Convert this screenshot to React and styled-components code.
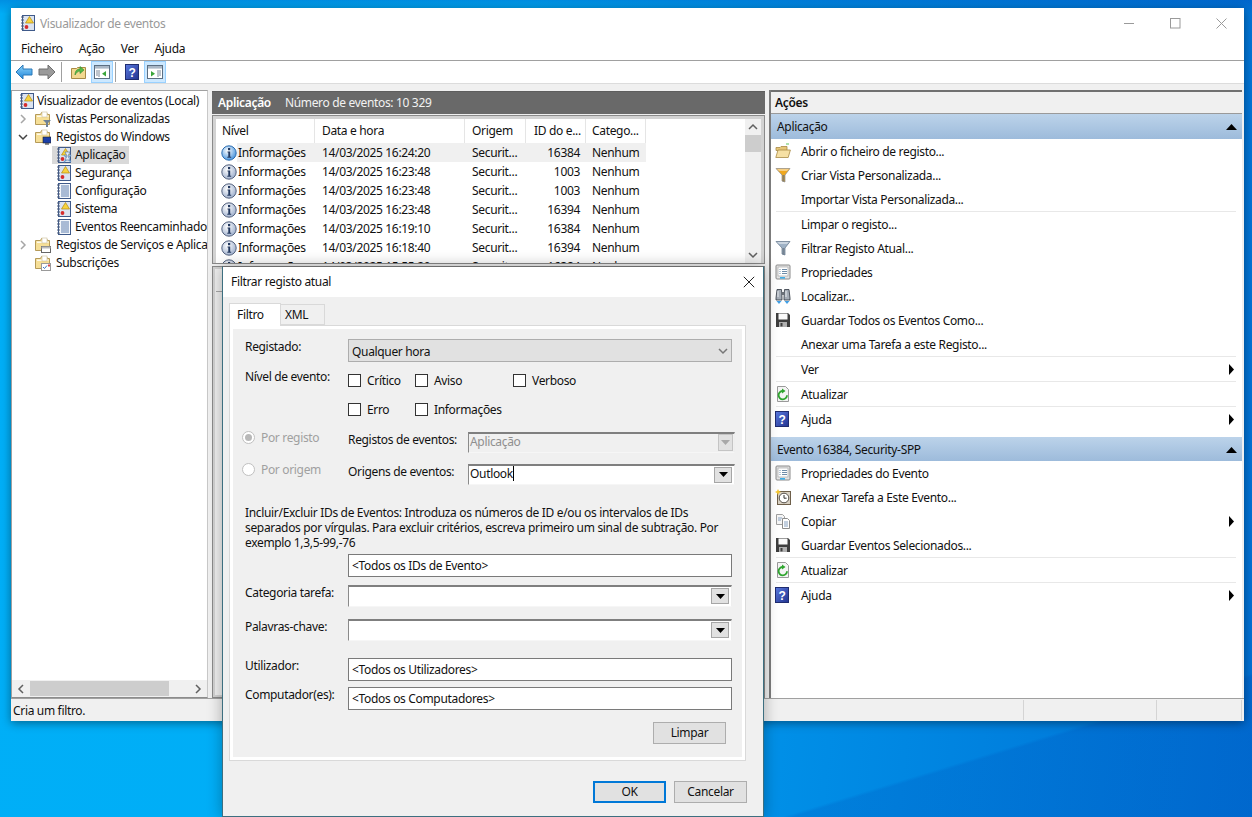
import React from "react";
import styled, { createGlobalStyle } from "styled-components";

const Global = createGlobalStyle`
  html, body { margin: 0; padding: 0; width: 100%; height: 100%; overflow: hidden; }
  body { font-family: "Noto Sans", "Open Sans", "Liberation Sans", sans-serif; font-size: 12px; letter-spacing: -0.33px; color: #111; }
  * { box-sizing: border-box; }
`;

const Desktop = styled.div`
  position: relative; width: 1252px; height: 817px; overflow: hidden;
  background:
    linear-gradient(163deg, transparent 88%, rgba(0,60,170,.16) 88.3%),
    linear-gradient(180deg, rgba(0,60,170,.28) 0, rgba(0,60,170,0) 14px),
    linear-gradient(96deg, #00aff7 0%, #00adf6 40%, #0091e8 62%, #0070d4 100%);
`;
const Win = styled.div`
  position: absolute; left: 11px; top: 8px; width: 1233px; height: 713px;
  display: flex; flex-direction: column; background: #f0f0f0;
  box-shadow: 0 2px 9px rgba(0,0,0,.42);
`;
const TitleBar = styled.div`
  height: 30px; flex: none; display: flex; align-items: center; background: #fff; padding-left: 9px; color: #999;
`;
const TitleText = styled.span`margin-left: 4px; flex: 1;`;
const WinBtn = styled.div`width: 46px; height: 30px; display: flex; align-items: center; justify-content: center;`;
const MenuBar = styled.div`
  height: 23px; flex: none; display: flex; align-items: center; background: #fff; padding-left: 10px; gap: 16px;
  border-bottom: 1px solid #a0a0a0;
`;
const MenuItem = styled.span`padding-bottom: 2px;`;
const Toolbar = styled.div`
  height: 23px; flex: none; display: flex; align-items: center; background: #fff; padding-left: 4px;
  border-bottom: 1px solid #dcdcdc;
`;
const ToolBtn = styled.div`
  width: ${p => p.$w || 22}px; height: 22px; display: flex; align-items: center; justify-content: center;
  margin: 0 ${p => p.$mr || 0}px 0 ${p => p.$ml || 0}px;
  background: ${p => (p.$on ? "#cce8ff" : "transparent")}; border: 1px solid ${p => (p.$on ? "#99d1ff" : "transparent")};
`;
const ToolSep = styled.div`width: 1px; height: 20px; background: #a0a0a0; margin: 0 ${p => p.$r}px 0 ${p => p.$l}px;`;

const Main = styled.div`flex: 1; min-height: 0; display: flex; padding: 6px 2px 0 0;`;
const TreePane = styled.div`
  width: 197px; flex: none; display: flex; flex-direction: column; background: #fff;
  border: 1px solid #a0a0a0; border-right-color: #c8c8c8; border-bottom-color: #8c8c8c; margin-right: 4px;
`;
const TreeBody = styled.div`flex: 1; min-height: 0; overflow: hidden; padding-top: 1px;`;
const TreeRow = styled.div`
  height: 18px; display: flex; align-items: center; white-space: nowrap; padding-left: ${p => p.$indent}px;
`;
const Chevron = styled.span`width: 14px; flex: none; display: flex; align-items: center; justify-content: center; margin-right: 5px;`;
const TreeLabel = styled.span`margin-left: ${p => p.$gap}px; line-height: 18px;`;
const TreeSel = styled.div`
  display: flex; align-items: center; height: 18px; background: ${p => (p.$sel ? "#d9d9d9" : "transparent")}; padding: 0 3px 0 4px; margin-left: -4px;
`;
const HScroll = styled.div`
  height: 17px; flex: none; display: flex; align-items: center; background: #f0f0f0; justify-content: space-between;
`;
const HThumb = styled.div`width: 139px; height: 15px; background: #cdcdcd; margin: 0 auto 0 0;`;
const ScrollArrow = styled.span`width: 18px; flex: none; display: flex; align-items: center; justify-content: center;`;

const Center = styled.div`width: 553px; flex: none; display: flex; flex-direction: column; margin-right: 4px;`;
const Header = styled.div`
  height: 23px; flex: none; background: #696969; display: flex; align-items: center; padding: 0 0 2px 6px; color: #f2f2f2; margin-top: 1px;
  border-top: 1px solid #5e5e5e;
`;
const HeaderTitle = styled.b`font-weight: 600; color: #fff; margin-right: 14px;`;
const TablePanel = styled.div`
  height: 149px; flex: none; margin-top: 1px; display: flex;
  border: 1px solid #8a8a8a; background: #fff; box-shadow: inset 0 0 0 3px #d2d2d2; padding: 3px 3px 0 3px;
`;
const TableArea = styled.div`flex: 1; min-width: 0; overflow: hidden; background: #fff;`;
const Row = styled.div`display: flex; height: ${p => p.$h}px; align-items: center; width: 430px;`;
const Cell = styled.div`
  width: ${p => p.$w}px; flex: none; height: 100%; display: flex; align-items: center; white-space: nowrap;
  padding: 0 6px 0 ${p => p.$pl ?? 7}px; justify-content: ${p => (p.$right ? "flex-end" : "flex-start")};
`;
const HeadCell = styled(Cell)`border-right: 1px solid #e5e5e5; padding-bottom: 1px;`;
const InfoText = styled.span`
  flex: 1; height: 100%; display: flex; align-items: center; padding-left: 1px; margin-right: -6px;
  background: ${p => (p.$hi ? "#f0f0f0" : "transparent")};
`;
const HiCell = styled(Cell)`background: ${p => (p.$hi ? "#f0f0f0" : "transparent")};`;
const VScroll = styled.div`
  width: 16px; flex: none; display: flex; flex-direction: column; background: #f0f0f0; align-items: stretch;
`;
const VThumb = styled.div`height: 17px; background: #cdcdcd; flex: none;`;
const VArrow = styled.div`height: 16px; flex: none; display: flex; align-items: center; justify-content: center;`;
const VSpace = styled.div`flex: 1;`;
const LowerPanel = styled.div`
  flex: 1; margin-top: 2px; border: 1px solid #8a8a8a; background: #f0f0f0; box-shadow: inset 0 0 0 2px #d2d2d2; padding: 3px;
`;
const LowerHead = styled.div`height: 22px; border-bottom: 1px solid #a8a8a8;`;

const Actions = styled.div`flex: 1; min-width: 0; display: flex; flex-direction: column; background: #fff; border-left: 2px solid #7c7c7c;`;
const ActionsHead = styled.div`
  height: 24px; flex: none; display: flex; align-items: center; padding: 0 0 0 4px; font-weight: 600; background: #f0f0f0;
  border-top: 2px solid #707070; border-bottom: 1px solid #9a9a9a;
`;
const Section = styled.div`
  height: ${p => p.$h}px; flex: none; display: flex; align-items: center; justify-content: space-between;
  padding: 0 5px 0 6px; background: linear-gradient(180deg, #bcd3ea 0%, #9dbbdb 100%);
  margin-top: ${p => p.$mt || 0}px;
`;
const ActionRow = styled.div`height: 24px; display: flex; align-items: center; padding: 0 5px 0 4px;`;
const ActionIcon = styled.span`width: 26px; flex: none; display: flex; align-items: center;`;
const ActionText = styled.span`flex: 1; white-space: nowrap;`;
const ActionSep = styled.div`height: 1px; background: #e8e8e8; margin: 0 6px 0 5px;`;

const Status = styled.div`
  height: 23px; flex: none; display: flex; align-items: center; background: #f0f0f0; border-top: 1px solid #a0a0a0;
`;
const StatusText = styled.span`width: 1012px; flex: none; padding-left: 2px;`;
const StatusDiv = styled.span`width: 1px; height: 20px; background: #d4d4d4; flex: none; margin-right: ${p => p.$mr}px;`;

/* Dialog */
const Dialog = styled.div`
  position: absolute; left: 222px; top: 266px; width: 542px; height: 551px; background: #f0f0f0;
  display: flex; flex-direction: column; border: 1px solid #3d6f80; border-top-color: #6b6b6b;
  box-shadow: 0 0 14px rgba(0,0,0,.3);
`;
const DlgTitle = styled.div`height: 30px; flex: none; background: #fff; display: flex; align-items: center; padding: 0 8px 1px; justify-content: space-between;`;
const Tabs = styled.div`height: 28px; flex: none; display: flex; align-items: flex-end; padding-left: 6px; position: relative; z-index: 1;`;
const Tab = styled.div`
  height: ${p => (p.$on ? 23 : 21)}px; width: ${p => p.$w}px; display: flex; align-items: center; justify-content: flex-start;
  background: ${p => (p.$on ? "#fff" : "#f0f0f0")}; border: 1px solid #d9d9d9;
  border-bottom: ${p => (p.$on ? "none" : "1px solid #d9d9d9")}; border-left: ${p => (p.$on ? "1px solid #d9d9d9" : "none")};
  margin-bottom: ${p => (p.$on ? -1 : 0)}px; padding: 0 0 ${p => (p.$on ? 2 : 0)}px ${p => (p.$on ? 7 : 4)}px;
`;
const TabPanel = styled.div`
  height: 436px; width: 517px; flex: none; margin-left: 6px; border: 1px solid #d9d9d9; box-shadow: inset 0 0 0 3px #fff; background: #f0f0f0;
  padding: 13px 0 0 15px;
`;
const FormRow = styled.div`display: flex; align-items: flex-start; margin-top: ${p => p.$mt || 0}px; margin-left: ${p => p.$ml || 0}px;`;
const Label = styled.div`width: ${p => p.$w || 103}px; flex: none; line-height: 16px; margin-top: ${p => p.$top || 0}px; white-space: nowrap;`;
const SelectBox = styled.div`
  width: 384px; height: 23px; background: #e1e1e1; border: 1px solid #adadad; display: flex; align-items: center; justify-content: space-between; padding: 1px 3px 0 3px;
`;
const Checks = styled.div`display: flex; flex-direction: column; gap: 16px; padding-top: 5px;`;
const CheckRow = styled.div`display: flex; height: 13px; align-items: center;`;
const CheckItem = styled.div`width: ${p => p.$w}px; flex: none; display: flex; align-items: center; white-space: nowrap;`;
const CheckBox = styled.span`width: 13px; height: 13px; flex: none; border: 1px solid #333; background: #fff; margin-right: 6px;`;
const RadioItem = styled.div`width: 106px; flex: none; display: flex; align-items: center; color: #a0a0a0; height: 14px; margin-top: ${p => p.$top || 0}px;`;
const Radio = styled.span`
  width: 13px; height: 13px; flex: none; border-radius: 50%; border: 1px solid #c0c0c0; background: #fff; margin-right: 6px;
  display: flex; align-items: center; justify-content: center;
  &::after { content: ""; width: 7px; height: 7px; border-radius: 50%; background: ${p => (p.$on ? "#b8b8b8" : "transparent")}; }
`;
const Combo = styled.div`
  width: ${p => p.$w}px; height: ${p => p.$h || 21}px; display: flex; align-items: center; padding: 0 ${p => p.$pr || 2}px 0 1px;
  background: ${p => (p.$off ? "#f0f0f0" : "#fff")}; color: ${p => (p.$off ? "#8f8f8f" : "#111")};
  border-top: 2px solid #7f7f7f; border-left: 1px solid #8a8a8a; border-right: 1px solid #eee; border-bottom: 1px solid #f6f6f6;
`;
const ComboText = styled.span`flex: 1; white-space: nowrap; display: flex; align-items: center; padding-bottom: 3px;`;
const Caret = styled.i`display: inline-block; width: 1px; height: 15px; background: #000;`;
const ComboBtn = styled.span`
  width: ${p => p.$w || 18}px; height: ${p => p.$h || 16}px; flex: none; display: flex; align-items: center; justify-content: center;
  background: #e1e1e1; border: 1px solid ${p => (p.$off ? "#c4c4c4" : "#a6a6a6")}; margin-top: -1px;
`;
const Desc = styled.div`line-height: 15px; margin-top: ${p => p.$mt}px; white-space: nowrap;`;
const TextBox = styled.div`
  width: 384px; height: 23px; background: #fff; border: 1px solid #7a7a7a; display: flex; align-items: center; padding-left: 3px; white-space: nowrap;
`;
const BtnRow = styled.div`display: flex; justify-content: flex-end; gap: 8px; margin-top: ${p => p.$mt}px; padding-right: ${p => p.$pr}px;`;
const Btn = styled.div`
  width: 73px; height: 22px; display: flex; align-items: center; justify-content: center; background: #e1e1e1;
  border: ${p => (p.$def ? "2px solid #0078d7" : "1px solid #adadad")}; padding-bottom: 1px;
`;

/* Icons */
const Svg = ({ s = 16, children, vb = "0 0 16 16" }) => (
  <svg width={s} height={s} viewBox={vb} style={{ display: "block", flex: "none" }}>{children}</svg>
);
const Book = ({ warn }) => (
  <>
    <rect x="2.5" y="0.5" width="12" height="15" fill={warn ? "#dbe3f0" : "#f4f7fb"} stroke="#3f5a8a" />
    {[2, 5, 8, 11, 14].map(y => <path key={y} d={`M1 ${y}h3`} stroke="#4a5a7a" />)}
    {!warn && [3, 5, 7, 9, 11, 13].map(y => <path key={y} d={`M5 ${y}h8`} stroke="#5f7fae" />)}
    {warn && <path d="M9.5 1.5 L13.5 8 H5.5 Z" fill="#f7d33c" stroke="#b58a10" strokeWidth=".7" />}
    {warn && <circle cx="6.5" cy="12" r="1.9" fill="#d62c2c" />}
  </>
);
const LogBook = () => <Svg><Book warn /></Svg>;
const PlainLog = () => <Svg><Book /></Svg>;
const FolderBase = () => (
  <>
    <path d="M.5 3.5h5l1-2h5l1 2h2v10H.5z" fill="#f6df97" stroke="#b59a58" />
    <rect x="2" y="4.5" width="11.5" height="1.5" fill="#fff" opacity=".8" />
    <rect x="7" y="1" width="5" height="5" fill="#fff" stroke="#c9bd96" strokeWidth=".6" />
  </>
);
const FolderFilter = () => <Svg><FolderBase /><path d="M8 9h8l-3 3v4h-2v-4z" fill="#6f8296" /></Svg>;
const FolderWin = () => <Svg><FolderBase /><rect x="8" y="8" width="8" height="6" fill="#1b3fa8" stroke="#222" strokeWidth=".6" /><path d="M10 15h4" stroke="#222" /></Svg>;
const FolderSvc = () => <Svg><FolderBase /><rect x="6.5" y="9.5" width="9" height="6" fill="#fff" stroke="#666" /><rect x="6.5" y="9.5" width="9" height="2" fill="#bbb" /></Svg>;
const FolderSub = () => <Svg><FolderBase /><rect x="6.5" y="8.5" width="9" height="7" fill="#fff" stroke="#9a9a9a" /><path d="M8 12l1.5 1.5L12 10.5" stroke="#3a78c8" fill="none" /><rect x="13" y="9.5" width="2" height="2" fill="#d44" /></Svg>;
const AppLog = () => (
  <Svg>
    <Book warn />
    <path d="M8 8l7 7M15 8l-7 7" stroke="#6f9fd0" strokeWidth="1.3" />
    <path d="M9 5h5l-2 4 2 4H9l2-4z" fill="#e6eef8" stroke="#5a7aa8" strokeWidth=".7" />
  </Svg>
);
const Info = ({ blue }) => (
  <Svg>
    <defs>
      <radialGradient id={blue ? "ib" : "ig"} cx=".4" cy=".35" r=".7">
        <stop offset="0" stopColor="#fff" />
        <stop offset="1" stopColor={blue ? "#3f8fdc" : "#9aaccb"} />
      </radialGradient>
    </defs>
    <circle cx="8" cy="8" r="7.2" fill={`url(#${blue ? "ib" : "ig"})`} stroke={blue ? "#2b6cb0" : "#54627e"} />
    <rect x="7" y="3" width="2.2" height="2.2" fill="#23395f" />
    <path d="M6.5 6.5h2.7v5.2h1v1H6.3v-1h1V7.5h-.8z" fill="#23395f" />
  </Svg>
);
const ArrowLeft = () => (
  <Svg s={18} vb="0 0 18 18">
    <defs><linearGradient id="al" x1="0" y1="0" x2="0" y2="1"><stop offset="0" stopColor="#8fd4fa" /><stop offset="1" stopColor="#1f86da" /></linearGradient></defs>
    <path d="M1 9l7-7v4h9v6H8v4z" fill="url(#al)" stroke="#2a78b8" />
  </Svg>
);
const ArrowRight = () => (
  <Svg s={18} vb="0 0 18 18">
    <path d="M17 9l-7-7v4H1v6h9v4z" fill="#9b9b9b" stroke="#6e6e6e" />
  </Svg>
);
const FolderUp = () => (
  <Svg>
    <path d="M.5 4.5h5l1-1h8v11H.5z" fill="#f3d88f" stroke="#a88a45" />
    <path d="M4 11 C4 7 6 5 9 5 V2.5 L13 6l-4 3.5V7C7 7 5.5 8.5 4 11z" fill="#58b947" stroke="#2f8a2a" strokeWidth=".6" />
  </Svg>
);
const PaneIcon = ({ right }) => (
  <Svg>
    <rect x=".5" y="1.5" width="15" height="13" fill="#fff" stroke="#5b6e82" />
    <rect x="1" y="2" width="14" height="2.6" fill="#a9b7c6" />
    {right
      ? <><path d="M11 6v7M12 7h2M12 9h2M12 11h2" stroke="#7c8a9a" /><path d="M4 7l4 2.8L4 12.5z" fill="#3aa53a" /></>
      : <><path d="M5 6v7M2 7h2M2 9h2M2 11h2" stroke="#7c8a9a" /><path d="M12 7L8 9.8l4 2.7z" fill="#3aa53a" /></>}
  </Svg>
);
const Help = () => (
  <svg width="14" height="16" viewBox="0 0 14 16" style={{ display: "block", flex: "none" }}>
    <defs><linearGradient id="hg" x1="0" y1="0" x2="1" y2="1"><stop offset="0" stopColor="#5a7ae0" /><stop offset="1" stopColor="#22338f" /></linearGradient></defs>
    <rect x=".5" y=".5" width="13" height="15" fill="url(#hg)" stroke="#1f2c70" />
    <text x="7" y="12.5" textAnchor="middle" fontFamily="Liberation Sans" fontWeight="700" fontSize="12" fill="#fff">?</text>
  </svg>
);
const OpenFolder = () => (
  <Svg>
    <path d="M1 4.5h4l1-1h6v4H1z" fill="#e6c678" stroke="#a88a45" strokeWidth=".8" />
    <path d="M.8 14.5L3 7h12.4l-2.2 7.5z" fill="#f6e0a4" stroke="#a88a45" strokeWidth=".8" />
    <path d="M11 1h3" stroke="#5cc45c" />
  </Svg>
);
const Funnel = ({ c }) => (
  <Svg>
    <path d="M1 1.5h14l-5 6.5v7l-3-1V8z" fill={c} stroke={c === "#f0a81e" ? "#8d8d8d" : "#5f7288"} strokeWidth=".7" />
    <path d="M2 2h12l-2 2H4z" fill="#fff" opacity=".45" />
    <path d="M7.5 8v6.5h2V8z" fill="#6a7480" opacity=".75" />
  </Svg>
);
const Props = () => (
  <Svg>
    <rect x="1" y="1" width="14" height="14" rx="1" fill="#e4e4e4" stroke="#8a8a8a" />
    <rect x="3" y="3" width="10" height="9" fill="#fff" stroke="#a8a8a8" strokeWidth=".7" />
    <path d="M4.5 5.5h1M7 5.5h5M4.5 7.5h1M7 7.5h5M4.5 9.5h1M7 9.5h5" stroke="#6f8ca8" />
    <rect x="5" y="13" width="5" height="1.6" fill="#3faee8" />
  </Svg>
);
const Binoculars = () => (
  <Svg>
    <path d="M1 10l1-8.5h4.5L7 10v2H1zM9 10l.5-8.5H14l1 8.5v2H9z" fill="#a4acb6" stroke="#2f3640" strokeWidth=".8" />
    <path d="M3 3v6M11 3v6" stroke="#e8ecf0" />
    <rect x="6.5" y="4" width="3" height="3" fill="#6a7078" />
    <path d="M1.5 13h5L4 16zM9.5 13h5L12 16z" fill="#3f9fe6" />
  </Svg>
);
const Floppy = () => (
  <Svg>
    <path d="M1 1h12l2 2v12H1z" fill="#3e3e3e" />
    <rect x="3.5" y="1.5" width="9" height="6" fill="#fafafa" />
    <rect x="4" y="10" width="8" height="5" fill="#b0b0b0" />
    <rect x="5.5" y="11" width="2" height="3.4" fill="#3e3e3e" />
  </Svg>
);
const Refresh = () => (
  <Svg>
    <path d="M2.5.5h8l3 3v12h-11z" fill="#f4f4f4" stroke="#9a9a9a" />
    <path d="M12 9.2A4.2 4.2 0 1 1 8 5" fill="none" stroke="#2ea52e" strokeWidth="1.8" />
    <path d="M7 2.5l3.5 2.4L7 7.5z" fill="#2ea52e" />
  </Svg>
);
const ClockTask = () => (
  <Svg>
    <rect x="2.5" y="2.5" width="13" height="13" fill="#d8d0c2" stroke="#6e5f4a" />
    <circle cx="9" cy="9" r="4.8" fill="#fff" stroke="#55504a" />
    <path d="M9 6v3.2h2.6" stroke="#333" fill="none" />
    <path d="M3 0l1 2 2 1-2 1-1 2-1-2-2-1 2-1z" fill="#f7c830" />
  </Svg>
);
const Copy = () => (
  <Svg>
    <path d="M1.5 1.5h6l2 2v8h-8z" fill="#f6f6f6" stroke="#a0a0a0" />
    <path d="M7.5 5.5h5l2 2v8h-7z" fill="#fff" stroke="#8d8d8d" />
    <path d="M3 5h4M3 7h3M9 9h4M9 11h4M9 13h4" stroke="#86a0c0" />
  </Svg>
);
const Chev = ({ dir = "right", c = "#a6a6a6" }) => (
  <svg width="10" height="10" viewBox="0 0 10 10" style={{ display: "block" }}>
    <path d={dir === "right" ? "M3 1l4 4-4 4" : dir === "left" ? "M7 1L3 5l4 4" : dir === "up" ? "M1 7l4-4 4 4" : "M1 3l4 4 4-4"} fill="none" stroke={c} strokeWidth="1.5" />
  </svg>
);
const Tri = ({ dir }) => (
  <svg width="11" height="11" viewBox="0 0 11 11" style={{ display: "block", flex: "none" }}>
    <path d={dir === "up" ? "M0 9h11L5.5 3z" : dir === "right" ? "M3 0l5 5.5L3 11z" : "M1 3h9L5.5 8z"} fill="#000" />
  </svg>
);
const SmallDown = ({ c = "#000" }) => (
  <svg width="9" height="5" viewBox="0 0 9 5" style={{ display: "block" }}><path d="M0 0h9L4.5 5z" fill={c} /></svg>
);

/* Data */
const tree = [
  { indent: 7, gap: 2, icon: <LogBook />, label: "Visualizador de eventos (Local)" },
  { indent: 4, gap: 5, chev: "right", icon: <FolderFilter />, label: "Vistas Personalizadas" },
  { indent: 4, gap: 5, chev: "down", icon: <FolderWin />, label: "Registos do Windows" },
  { indent: 44, gap: 3, icon: <AppLog />, label: "Aplicação", sel: true },
  { indent: 44, gap: 3, icon: <LogBook />, label: "Segurança" },
  { indent: 44, gap: 3, icon: <PlainLog />, label: "Configuração" },
  { indent: 44, gap: 3, icon: <LogBook />, label: "Sistema" },
  { indent: 44, gap: 3, icon: <PlainLog />, label: "Eventos Reencaminhados" },
  { indent: 4, gap: 5, chev: "right", icon: <FolderSvc />, label: "Registos de Serviços e Aplicações" },
  { indent: 4, gap: 5, spacer: true, icon: <FolderSub />, label: "Subscrições" },
];
const events = [
  ["14/03/2025 16:24:20", "16384"],
  ["14/03/2025 16:23:48", "1003"],
  ["14/03/2025 16:23:48", "1003"],
  ["14/03/2025 16:23:48", "16394"],
  ["14/03/2025 16:19:10", "16384"],
  ["14/03/2025 16:18:40", "16394"],
  ["14/03/2025 15:55:20", "16384"],
];
const cols = [99, 150, 61, 60, 60];
const heads = [["Nível", 6], ["Data e hora", 7], ["Origem", 7], ["ID do e...", 8], ["Catego...", 6]];
const appActions = [
  { i: <OpenFolder />, t: "Abrir o ficheiro de registo..." },
  { i: <Funnel c="#f0a81e" />, t: "Criar Vista Personalizada..." },
  { t: "Importar Vista Personalizada...", sep: true },
  { t: "Limpar o registo..." },
  { i: <Funnel c="#9fb2c6" />, t: "Filtrar Registo Atual..." },
  { i: <Props />, t: "Propriedades" },
  { i: <Binoculars />, t: "Localizar..." },
  { i: <Floppy />, t: "Guardar Todos os Eventos Como..." },
  { t: "Anexar uma Tarefa a este Registo...", sep: true },
  { t: "Ver", more: true, sep: true },
  { i: <Refresh />, t: "Atualizar", sep: true },
  { i: <Help />, t: "Ajuda", more: true },
];
const evtActions = [
  { i: <Props />, t: "Propriedades do Evento" },
  { i: <ClockTask />, t: "Anexar Tarefa a Este Evento..." },
  { i: <Copy />, t: "Copiar", more: true },
  { i: <Floppy />, t: "Guardar Eventos Selecionados...", sep: true },
  { i: <Refresh />, t: "Atualizar", sep: true },
  { i: <Help />, t: "Ajuda", more: true },
];
const ActionList = ({ items }) => items.map(a => (
  <React.Fragment key={a.t}>
    <ActionRow>
      <ActionIcon>{a.i}</ActionIcon>
      <ActionText>{a.t}</ActionText>
      {a.more && <Tri dir="right" />}
    </ActionRow>
    {a.sep && <ActionSep />}
  </React.Fragment>
));

export default function App() {
  return (
    <Desktop>
      <Global />
      <Win>
        <TitleBar>
          <LogBook />
          <TitleText>Visualizador de eventos</TitleText>
          <WinBtn><svg width="11" height="11" viewBox="0 0 11 11"><path d="M0 5.5h10" stroke="#9a9a9a" /></svg></WinBtn>
          <WinBtn><svg width="11" height="11" viewBox="0 0 11 11"><rect x=".5" y=".5" width="9.5" height="9.5" fill="none" stroke="#9a9a9a" /></svg></WinBtn>
          <WinBtn><svg width="11" height="11" viewBox="0 0 11 11"><path d="M.5.5l10 10M10.5.5l-10 10" stroke="#9a9a9a" /></svg></WinBtn>
        </TitleBar>
        <MenuBar>
          <MenuItem>Ficheiro</MenuItem>
          <MenuItem>Ação</MenuItem>
          <MenuItem>Ver</MenuItem>
          <MenuItem>Ajuda</MenuItem>
        </MenuBar>
        <Toolbar>
          <ToolBtn $w={18}><ArrowLeft /></ToolBtn>
          <ToolBtn $w={18} $ml={5}><ArrowRight /></ToolBtn>
          <ToolSep $l={5} $r={9} />
          <ToolBtn $w={16} $mr={4}><FolderUp /></ToolBtn>
          <ToolBtn $on><PaneIcon /></ToolBtn>
          <ToolSep $l={2} $r={8} />
          <ToolBtn $w={16} $mr={4}><Help /></ToolBtn>
          <ToolBtn $on><PaneIcon right /></ToolBtn>
        </Toolbar>
        <Main>
          <TreePane>
            <TreeBody>
              {tree.map(n => (
                <TreeRow key={n.label} $indent={n.indent}>
                  {n.chev && <Chevron><Chev dir={n.chev} c={n.chev === "down" ? "#444" : "#a6a6a6"} /></Chevron>}
                  {n.spacer && <Chevron />}
                  <TreeSel $sel={n.sel}>
                    {n.icon}
                    <TreeLabel $gap={n.gap}>{n.label}</TreeLabel>
                  </TreeSel>
                </TreeRow>
              ))}
            </TreeBody>
            <HScroll>
              <ScrollArrow><Chev dir="left" c="#606060" /></ScrollArrow>
              <HThumb />
              <ScrollArrow><Chev dir="right" c="#606060" /></ScrollArrow>
            </HScroll>
          </TreePane>
          <Center>
            <Header>
              <HeaderTitle>Aplicação</HeaderTitle>
              Número de eventos: 10 329
            </Header>
            <TablePanel>
              <TableArea>
                <Row $h={24}>
                  {heads.map(([h, pl], i) => (
                    <HeadCell key={h} $w={cols[i]} $pl={pl}>{h}</HeadCell>
                  ))}
                </Row>
                {events.map(([d, id], i) => (
                  <Row key={i} $h={19}>
                    <Cell $w={cols[0]} $pl={5}>
                      <Info blue={i === 0} />
                      <InfoText $hi={i === 0}>Informações</InfoText>
                    </Cell>
                    <HiCell $w={cols[1]} $hi={i === 0}>{d}</HiCell>
                    <HiCell $w={cols[2]} $hi={i === 0}>Securit...</HiCell>
                    <HiCell $w={cols[3]} $hi={i === 0} $right>{id}</HiCell>
                    <HiCell $w={cols[4]} $hi={i === 0} $pl={6}>Nenhum</HiCell>
                  </Row>
                ))}
              </TableArea>
              <VScroll>
                <VArrow><Chev dir="up" c="#606060" /></VArrow>
                <VThumb />
                <VSpace />
                <VArrow><Chev dir="down" c="#606060" /></VArrow>
              </VScroll>
            </TablePanel>
            <LowerPanel><LowerHead /></LowerPanel>
          </Center>
          <Actions>
            <ActionsHead>Ações</ActionsHead>
            <Section $h={25}>Aplicação<Tri dir="up" /></Section>
            <ActionList items={appActions} />
            <Section $h={24} $mt={6}>Evento 16384, Security-SPP<Tri dir="up" /></Section>
            <ActionList items={evtActions} />
          </Actions>
        </Main>
        <Status>
          <StatusText>Cria um filtro.</StatusText>
          <StatusDiv $mr={132} />
          <StatusDiv $mr={84} />
          <StatusDiv $mr={0} />
        </Status>
      </Win>

      <Dialog>
        <DlgTitle>
          Filtrar registo atual
          <svg width="12" height="12" viewBox="0 0 12 12"><path d="M.8.8l10.4 10.4M11.2.8L.8 11.2" stroke="#222" /></svg>
        </DlgTitle>
        <Tabs>
          <Tab $on $w={52}>Filtro</Tab>
          <Tab $w={44}>XML</Tab>
        </Tabs>
        <TabPanel>
          <FormRow>
            <Label>Registado:</Label>
            <SelectBox>Qualquer hora<Chev dir="down" c="#777" /></SelectBox>
          </FormRow>
          <FormRow $mt={7}>
            <Label>Nível de evento:</Label>
            <Checks>
              <CheckRow>
                <CheckItem $w={67}><CheckBox />Crítico</CheckItem>
                <CheckItem $w={98}><CheckBox />Aviso</CheckItem>
                <CheckItem $w={100}><CheckBox />Verboso</CheckItem>
              </CheckRow>
              <CheckRow>
                <CheckItem $w={67}><CheckBox />Erro</CheckItem>
                <CheckItem $w={98}><CheckBox />Informações</CheckItem>
              </CheckRow>
            </Checks>
          </FormRow>
          <FormRow $mt={16} $ml={-3}>
            <RadioItem $top={-2}><Radio $on />Por registo</RadioItem>
            <Label $w={120}>Registos de eventos:</Label>
            <Combo $w={267} $off $pr={1}>
              <ComboText>Aplicação</ComboText>
              <ComboBtn $w={15} $h={17} $off><SmallDown c="#a8a8a8" /></ComboBtn>
            </Combo>
          </FormRow>
          <FormRow $mt={11} $ml={-3}>
            <RadioItem $top={-2}><Radio />Por origem</RadioItem>
            <Label $w={120}>Origens de eventos:</Label>
            <Combo $w={267}>
              <ComboText>Outlook<Caret /></ComboText>
              <ComboBtn><SmallDown /></ComboBtn>
            </Combo>
          </FormRow>
          <Desc $mt={20}>
            Incluir/Excluir IDs de Eventos: Introduza os números de ID e/ou os intervalos de IDs<br />
            separados por vírgulas. Para excluir critérios, escreva primeiro um sinal de subtração. Por<br />
            exemplo 1,3,5-99,-76
          </Desc>
          <FormRow $mt={4} $ml={103}>
            <TextBox>&lt;Todos os IDs de Evento&gt;</TextBox>
          </FormRow>
          <FormRow $mt={8}>
            <Label>Categoria tarefa:</Label>
            <Combo $w={384} $h={22}>
              <ComboText />
              <ComboBtn><SmallDown /></ComboBtn>
            </Combo>
          </FormRow>
          <FormRow $mt={12}>
            <Label>Palavras-chave:</Label>
            <Combo $w={384} $h={22}>
              <ComboText />
              <ComboBtn><SmallDown /></ComboBtn>
            </Combo>
          </FormRow>
          <FormRow $mt={17}>
            <Label>Utilizador:</Label>
            <TextBox>&lt;Todos os Utilizadores&gt;</TextBox>
          </FormRow>
          <FormRow $mt={6}>
            <Label>Computador(es):</Label>
            <TextBox>&lt;Todos os Computadores&gt;</TextBox>
          </FormRow>
          <BtnRow $mt={12} $pr={19}>
            <Btn>Limpar</Btn>
          </BtnRow>
        </TabPanel>
        <BtnRow $mt={20} $pr={16}>
          <Btn $def>OK</Btn>
          <Btn>Cancelar</Btn>
        </BtnRow>
      </Dialog>
    </Desktop>
  );
}
